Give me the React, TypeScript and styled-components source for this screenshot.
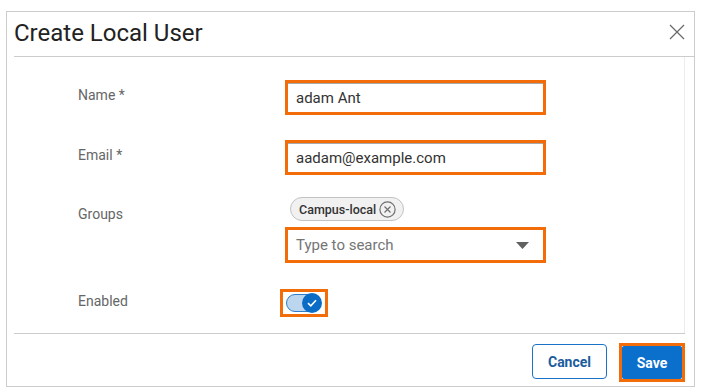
import styled, { createGlobalStyle } from 'styled-components'

const GlobalStyle = createGlobalStyle`
  html, body {
    margin: 0;
    padding: 0;
    background: #fff;
    font-family: Roboto, "Liberation Sans", Arial, sans-serif;
  }
  * {
    box-sizing: border-box;
  }
`

export default function App() {
  return (
    <>
      <GlobalStyle />
      <Dialog>
        <Header>
          <Title>Create Local User</Title>
          <CloseButton aria-label="Close">
            <svg width="16" height="16" viewBox="0 0 16 16">
              <path d="M1 1 L15 15 M15 1 L1 15" stroke="#6b6b6b" strokeWidth="1.3" fill="none" />
            </svg>
          </CloseButton>
        </Header>
        <Body>
          <Row $top={23}>
            <Label $offset={5}>Name *</Label>
            <Highlight>
              <Input defaultValue="adam Ant" />
            </Highlight>
          </Row>
          <Row $top={25}>
            <Label $offset={5}>Email *</Label>
            <Highlight>
              <Input defaultValue="aadam@example.com" />
            </Highlight>
          </Row>
          <Row $top={22}>
            <Label $offset={7}>Groups</Label>
            <Stack>
              <Chip>
                Campus-local
                <svg width="17" height="17" viewBox="0 0 17 17">
                  <circle cx="8.5" cy="8.5" r="7.6" stroke="#707070" strokeWidth="1.2" fill="none" />
                  <path d="M5.5 5.5 L11.5 11.5 M11.5 5.5 L5.5 11.5" stroke="#707070" strokeWidth="1.2" />
                </svg>
              </Chip>
              <Highlight $height={36}>
                <SearchBox>
                  <Placeholder>Type to search</Placeholder>
                  <svg width="13" height="7" viewBox="0 0 13 7">
                    <path d="M0 0 L13 0 L6.5 7 Z" fill="#616161" />
                  </svg>
                </SearchBox>
              </Highlight>
            </Stack>
          </Row>
          <Row $top={26}>
            <Label $offset={2}>Enabled</Label>
            <ToggleFrame>
              <Track>
                <Knob>
                  <svg width="10" height="8" viewBox="0 0 10 8">
                    <path d="M1 4.2 L3.8 6.8 L9 1.2" stroke="#fff" strokeWidth="1.6" fill="none" />
                  </svg>
                </Knob>
              </Track>
            </ToggleFrame>
          </Row>
        </Body>
        <Footer>
          <CancelButton>Cancel</CancelButton>
          <SaveFrame>
            <SaveButton>Save</SaveButton>
          </SaveFrame>
        </Footer>
      </Dialog>
    </>
  )
}

const Dialog = styled.div`
  margin: 11px 0 0 6px;
  width: 689px;
  height: 376px;
  border: 1px solid #cccccc;
  padding-left: 7px;
  display: flex;
  flex-direction: column;
  background: #fff;
`

const Header = styled.div`
  height: 45px;
  flex: none;
  border-bottom: 1px solid #cccccc;
  display: flex;
  align-items: center;
  justify-content: space-between;
  padding-right: 9px;
`

const Title = styled.h1`
  margin: 0 0 2px;
  font-size: 24px;
  font-weight: 400;
  color: #222;
`

const CloseButton = styled.button`
  border: 0;
  background: none;
  padding: 0;
  display: flex;
  margin-bottom: 4px;
`

const Body = styled.div`
  flex: 1;
  margin-right: 9px;
  border-right: 1px solid #ececec;
  padding-left: 64px;
  display: flex;
  flex-direction: column;
`

const Row = styled.div<{ $top: number }>`
  margin-top: ${(p) => p.$top}px;
  display: grid;
  grid-template-columns: 207px 261px;
  align-items: start;
`

const Label = styled.div<{ $offset: number }>`
  padding-top: ${(p) => p.$offset}px;
  font-size: 14px;
  line-height: 20px;
  color: #666;
`

const Highlight = styled.div<{ $height?: number }>`
  height: ${(p) => p.$height ?? 35}px;
  border: 3px solid #f36c0a;
  display: flex;
`

const Input = styled.input`
  flex: 1;
  min-width: 0;
  border: 0;
  border-top: 1px solid #a8a8a8;
  padding: 0 8px;
  font-family: inherit;
  font-size: 15px;
  color: #333;
  outline: none;
  background: #fff;
`

const Stack = styled.div`
  display: flex;
  flex-direction: column;
  align-items: flex-start;
  gap: 6px;
`

const Chip = styled.div`
  margin-left: 5px;
  height: 24px;
  border: 1px solid #c2c2c2;
  border-radius: 12px;
  background: #f1f1f1;
  display: flex;
  align-items: center;
  gap: 3px;
  padding: 0 7px 0 8px;
  font-size: 12.5px;
  font-weight: 500;
  color: #333;

  svg {
    flex: none;
  }
`

const SearchBox = styled.div`
  flex: 1;
  display: flex;
  align-items: center;
  justify-content: space-between;
  padding: 0 14px 0 8px;
  width: 255px;
`

const Placeholder = styled.span`
  font-size: 15px;
  color: #757575;
`

const ToggleFrame = styled.div`
  margin-left: -5px;
  width: 48px;
  height: 28px;
  border: 3px solid #f36c0a;
  display: flex;
  align-items: center;
  padding-left: 3px;
`

const Track = styled.div`
  position: relative;
  width: 35px;
  height: 18px;
  border-radius: 9px;
  background: #bcd6f0;
  border: 1px solid #2f7cc7;
`

const Knob = styled.div`
  position: absolute;
  right: -2px;
  top: -2px;
  width: 20px;
  height: 20px;
  border-radius: 50%;
  background: #0b6cc6;
  display: flex;
  align-items: center;
  justify-content: center;
`

const Footer = styled.div`
  height: 53px;
  flex: none;
  margin-right: 9px;
  border-top: 1px solid #cccccc;
  display: flex;
  justify-content: flex-end;
  align-items: flex-start;
  padding-top: 10px;
  gap: 12px;
`

const CancelButton = styled.button`
  width: 75px;
  height: 35px;
  border: 1px solid #1a73c8;
  border-radius: 4px;
  background: #fff;
  color: #1b5c9e;
  font-family: inherit;
  font-size: 14px;
  font-weight: 700;
`

const SaveFrame = styled.div`
  margin-top: -1px;
  width: 66px;
  height: 39px;
  border: 3px solid #f36c0a;
  display: flex;
`

const SaveButton = styled.button`
  flex: 1;
  border: 0;
  border-radius: 2px;
  background: #0b6fcc;
  color: #fff;
  font-family: inherit;
  font-size: 14px;
  font-weight: 700;
`
